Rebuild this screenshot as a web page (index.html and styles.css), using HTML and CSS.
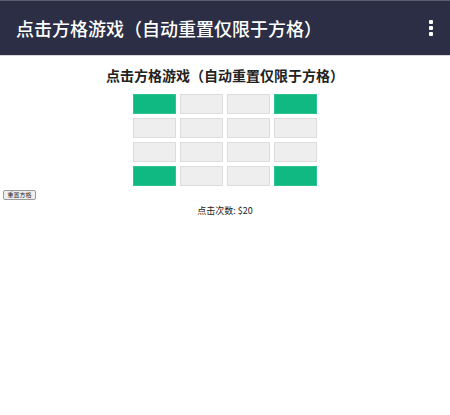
FILE: index.html
```html
<!DOCTYPE html>
<html lang="zh">
<head>
<meta charset="utf-8">
<title>点击方格游戏</title>
<link rel="stylesheet" href="styles.css">
</head>
<body>
<header class="appbar">
  <div class="appbar-title">点击方格游戏（自动重置仅限于方格）</div>
  <div class="kebab"><span></span><span></span><span></span></div>
</header>
<main class="content">
  <h2 class="game-title">点击方格游戏（自动重置仅限于方格）</h2>
  <div class="grid">
    <div class="cell on"></div><div class="cell"></div><div class="cell"></div><div class="cell on"></div>
    <div class="cell"></div><div class="cell"></div><div class="cell"></div><div class="cell"></div>
    <div class="cell"></div><div class="cell"></div><div class="cell"></div><div class="cell"></div>
    <div class="cell on"></div><div class="cell"></div><div class="cell"></div><div class="cell on"></div>
  </div>
  <div class="controls"><button class="reset">重置方格</button></div>
  <p class="count">点击次数: $20</p>
</main>
</body>
</html>
```
FILE: styles.css
```css
html, body {
  margin: 0;
  padding: 0;
  background: #fff;
  font-family: "Noto Sans CJK SC", "Noto Sans", sans-serif;
}
.appbar {
  height: 56px;
  box-sizing: border-box;
  border-top: 1px solid #5a5d70;
  background: #2c2e45;
  border-bottom: 1px solid #d8d8dc;
  display: flex;
  align-items: center;
  justify-content: space-between;
  padding: 0 17px 0 16px;
  color: #fff;
}
.appbar-title {
  font-size: 18px;
  font-weight: 500;
  white-space: nowrap;
}
.kebab {
  display: flex;
  flex-direction: column;
  gap: 2px;
}
.kebab span {
  width: 4px;
  height: 4px;
  background: #fff;
  border-radius: 1px;
}
.content {
  display: flex;
  flex-direction: column;
}
.game-title {
  margin: 9px 0 9px;
  text-align: center;
  font-size: 14px;
  line-height: 20px;
  font-weight: 700;
  color: #222;
}
.grid {
  align-self: center;
  display: grid;
  grid-template-columns: repeat(4, 43px);
  grid-auto-rows: 20px;
  gap: 4px;
}
.cell {
  box-sizing: border-box;
  background: #eeeeee;
  border: 1px solid #dddddd;
}
.cell.on {
  background: #10b981;
  border-color: #2cc494;
}
.controls {
  display: flex;
  margin: 4px 0 0 3px;
}
.reset {
  font-family: "Noto Sans CJK SC", sans-serif;
  font-size: 6px;
  line-height: 8px;
  padding: 0 3px;
  height: 10px;
  width: 33px;
  border: 1px solid #9a9a9a;
  border-radius: 2px;
  background: #efefef;
  color: #222;
}
.count {
  margin: 6px 0 0;
  text-align: center;
  font-size: 9px;
  line-height: 10px;
  color: #222;
}
```
